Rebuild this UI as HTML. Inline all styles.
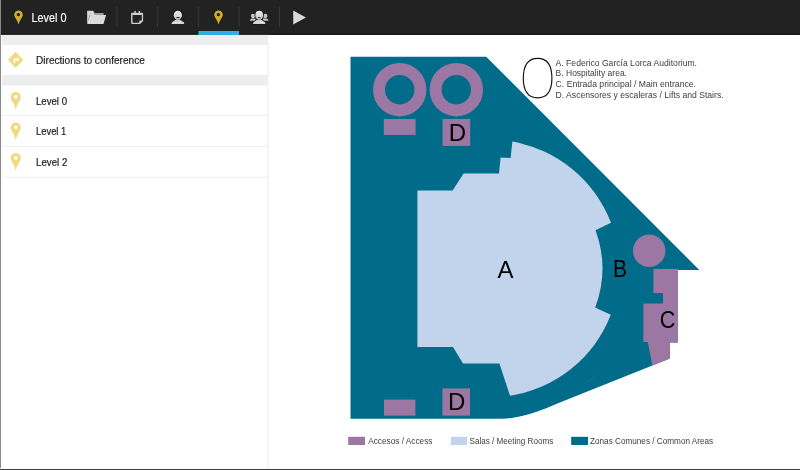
<!DOCTYPE html>
<html>
<head>
<meta charset="utf-8">
<style>
html,body{margin:0;padding:0;}
body{width:800px;height:470px;overflow:hidden;background:#fff;font-family:"Liberation Sans",sans-serif;position:relative;}
#lb{position:absolute;left:0;top:0;width:1px;height:470px;background:#888;}
#bb{position:absolute;left:0;top:468px;width:800px;height:2px;background:linear-gradient(#f4f4f4 0,#f4f4f4 50%,#464646 50%,#464646 100%);}
svg{position:absolute;left:0;top:0;will-change:transform;}
</style>
</head>
<body>
<svg width="800" height="470" viewBox="0 0 800 470" font-family="'Liberation Sans', sans-serif">
  <defs>
    <linearGradient id="hg" x1="0" y1="0" x2="0" y2="1"><stop offset="0" stop-color="#e6e6e6"/><stop offset="0.6" stop-color="#d8d8d8"/><stop offset="1" stop-color="#b4b4b4"/></linearGradient>
    <linearGradient id="sg" x1="0" y1="0" x2="0" y2="1"><stop offset="0" stop-color="#c4c4c4"/><stop offset="0.5" stop-color="#dedede"/><stop offset="1" stop-color="#d2d2d2"/></linearGradient>
  </defs>
  <!-- chrome -->
  <rect x="0" y="0" width="800" height="34" fill="#222"/>
  <rect x="0" y="33.8" width="800" height="1.1" fill="#000"/>
  <rect x="2" y="34.9" width="265.6" height="10" fill="#eee"/>
  <rect x="2" y="74.8" width="265.6" height="10.9" fill="#eee"/>
  <rect x="267.2" y="34.9" width="1.4" height="433" fill="#f1f1f1"/>
  <rect x="2" y="114.9" width="265" height="1" fill="#efefef"/>
  <rect x="2" y="146" width="265" height="1" fill="#efefef"/>
  <rect x="2" y="176.7" width="265" height="1" fill="#efefef"/>
  <!-- header -->
  <g id="hicons">
    <path id="hpin" d="M18.5 10.5 a4.35 4.35 0 0 1 4.35 4.35 c0 1.8 -1.3 3.2 -2.35 5 c-0.95 1.6 -1.55 3.2 -2 5 c-0.45 -1.8 -1.05 -3.4 -2 -5 c-1.05 -1.8 -2.35 -3.2 -2.35 -5 a4.35 4.35 0 0 1 4.35 -4.35z M18.4 13 a1.65 1.65 0 1 0 0.001 0z" fill="#cfad2f" fill-rule="evenodd" stroke="#141414" stroke-width="1" paint-order="stroke"/>
    <text x="31.5" y="22" font-size="11.9" fill="#fff" stroke="#fff" stroke-width="0.12" textLength="35" lengthAdjust="spacingAndGlyphs">Level 0</text>
    <rect x="116.5" y="7" width="1" height="20" fill="#383838"/>
    <rect x="157" y="7" width="1" height="20" fill="#383838"/>
    <rect x="198" y="7" width="1" height="20" fill="#383838"/>
    <rect x="238.5" y="7" width="1" height="20" fill="#383838"/>
    <rect x="279" y="7" width="1" height="20" fill="#383838"/>
    <rect x="198.5" y="31" width="40.5" height="4" fill="#2fb0e4"/>
    <!-- folder -->
    <path d="M87.15 10.8 h6 l1.5 2.2 h8.7 v2 h-13.4 l-2.8 9z" fill="#d6d6d6"/>
    <path d="M94.2 13 h9.1 v1.9 h-9.1z" fill="#9a9a9a"/>
    <path d="M89.9 14.9 h16.2 l-2.6 9.1 h-16.35 l0.4 -1.5z" fill="#dcdcdc"/>
    <path d="M90 14.9 l-1.2 3.8" stroke="#888" stroke-width="0.5" fill="none"/>
    <!-- calendar -->
    <path d="M132.1 12.8 h10 a1 1 0 0 1 1 1 v7.3 l-3 3 h-8 a1 1 0 0 1 -1 -1 v-9.3 a1 1 0 0 1 1 -1z M132.5 15 v7.8 h6.8 v-2.4 h2.5 v-5.4z" fill="#cdcdcd" fill-rule="evenodd"/>
    <rect x="134.4" y="10.9" width="1.4" height="2.2" fill="#cdcdcd"/><rect x="138.7" y="10.9" width="1.4" height="2.2" fill="#cdcdcd"/>
    <!-- person -->
    <ellipse cx="177.85" cy="15.15" rx="4.75" ry="5" fill="#141414"/>
    <rect x="176" y="18.5" width="3.8" height="2.5" fill="#999"/>
    <ellipse cx="177.85" cy="15.15" rx="4.15" ry="4.45" fill="url(#hg)"/>
    <path d="M171.7 24 v-1 c0.3 -0.9 1.6 -1.6 3.6 -3 h5.2 c2 1.4 3.3 2.1 3.6 3 v1z" fill="url(#sg)"/>
    <path d="M176.2 16.9 h3.5 a1.75 1 0 0 1 -3.5 0z" fill="#111"/>
    <!-- pin tab -->
    <use href="#hpin" x="200"/>
    <!-- group -->
    <g fill="#c4c4c4">
      <circle cx="253" cy="16" r="2.15"/><circle cx="265.3" cy="16" r="2.15"/>
      <path d="M250 20.7 v-0.6 c0.2 -0.8 1 -1.2 2 -1.6 h3.4 v2.2z M268.3 20.7 v-0.6 c-0.2 -0.8 -1 -1.2 -2 -1.6 h-3.4 v2.2z"/>
    </g>
    <ellipse cx="259.2" cy="15.2" rx="4.5" ry="4.95" fill="#141414"/>
    <path d="M252.5 24.4 v-1.4 c0.3 -0.9 1.6 -2 3.6 -3.4 h6.2 c2 1.4 3.3 2.5 3.6 3.4 v1.4z" fill="#141414"/>
    <rect x="257.4" y="18.5" width="3.6" height="2.5" fill="#999"/>
    <ellipse cx="259.2" cy="15.2" rx="3.85" ry="4.35" fill="url(#hg)"/>
    <path d="M253.1 24 v-1 c0.3 -0.9 1.6 -1.6 3.4 -3 h5.4 c1.8 1.4 3.1 2.1 3.4 3 v1z" fill="url(#sg)"/>
    <path d="M257.7 17 h3 a1.5 0.85 0 0 1 -3 0z" fill="#111"/>
    <!-- play -->
    <path d="M293.2 10.6 L306 17.5 L293.2 24.4z" fill="#d8d8d8" stroke="#151515" stroke-width="1" paint-order="stroke"/>
  </g>
  <!-- side icons -->
  <g fill="#f1d97f">
    <path d="M15.7 52.2 L23 59.9 L15.7 67.5 L8.4 59.9Z" stroke="#f1d97f" stroke-width="0.7" stroke-linejoin="round"/>
    <path id="pin" d="M15.75 92.1 a5.1 5.1 0 0 1 5.1 5.1 c0 2.1 -1.5 3.8 -2.7 5.9 c-1.1 2 -1.9 4.2 -2.4 6.7 c-0.5 -2.5 -1.3 -4.7 -2.4 -6.7 c-1.2 -2.1 -2.7 -3.8 -2.7 -5.9 a5.1 5.1 0 0 1 5.1 -5.1z M15.85 95 a1.9 1.9 0 1 0 0.001 0z" fill-rule="evenodd"/>
    <use href="#pin" y="30.4"/>
    <use href="#pin" y="61"/>
  </g>
  <path d="M13.5 63 V59.6 a1 1 0 0 1 1 -1 H17 V57 L19.4 59.4 L17 61.7 V60.3 H15.2 V63 Z" fill="#fff"/>

  <g font-size="10.3" fill="#222" stroke="#222" stroke-width="0.2">
    <text x="36" y="64" textLength="108.8" lengthAdjust="spacingAndGlyphs">Directions to conference</text>
    <text x="36" y="104.6" textLength="31" lengthAdjust="spacingAndGlyphs">Level 0</text>
    <text x="36" y="135.2" textLength="30.3" lengthAdjust="spacingAndGlyphs">Level 1</text>
    <text x="36" y="165.8" textLength="31.3" lengthAdjust="spacingAndGlyphs">Level 2</text>
  </g>
  <!-- map -->
  <path d="M350.5 56.8 L486.2 56.8 L699.3 270 L678 270 L678 342.6 L669.9 342.6 L669.9 358.4 L558 403.2 Q523 418.8 502 418.8 L350.5 418.8 Z" fill="#006c8a"/>
  <path d="M417.4 190.4 L452.6 190.4 L463.6 173.6 L499 173.6 L500.6 157.6 L510.6 158 L512.4 141.6 A129 129 0 0 1 611 222.8 L595.5 230.2 A111.5 111.5 0 0 1 595.2 307.6 L610.8 314.8 A129 129 0 0 1 510 395.8 L499.4 363.6 L463 363.6 L453 347 L417.4 347 Z" fill="#c2d3ec"/>
  <g fill="#9c77a3">
    <path d="M653.4 269 L678 269 L678 342.6 L669.9 342.6 L669.9 358.4 L652.4 365.6 L647.8 342 L643.4 342 L643.4 303.6 L663 303.6 L663 293 L653.4 293 Z"/>
    <circle cx="649.2" cy="250.8" r="16.2"/>
    <rect x="383.8" y="119" width="31.8" height="15.9"/>
    <rect x="442.6" y="119" width="27.6" height="26.9"/>
    <rect x="384" y="399.6" width="31.4" height="16"/>
    <rect x="442.4" y="388.4" width="27.6" height="27.2"/>
  </g>
  <g fill="none" stroke="#9c77a3" stroke-width="12">
    <circle cx="399.7" cy="89.7" r="20.7"/>
    <circle cx="456.3" cy="89.7" r="20.7"/>
  </g>
  <g font-size="24" fill="#000">
    <text x="448.7" y="141.1">D</text>
    <text x="448" y="410.1">D</text>
    <text x="497.4" y="278">A</text>
    <text x="612.9" y="276.8" transform="translate(614.4 0) scale(0.88 1) translate(-614.4 0)">B</text>
    <text x="659.6" y="328.2" transform="translate(661 0) scale(0.9 1) translate(-661 0)">C</text>
  </g>
  <path d="M587 383 L596 375" stroke="#2b8199" stroke-width="0.5" fill="none"/>
  <!-- legend top -->
  <path d="M537.6 58.3 C547.038 58.3 551.9 65.032 551.9 78.1 C551.9 91.16799999999999 547.038 97.89999999999999 537.6 97.89999999999999 C528.162 97.89999999999999 523.3000000000001 91.16799999999999 523.3000000000001 78.1 C523.3000000000001 65.032 528.162 58.3 537.6 58.3Z" fill="none" stroke="#111" stroke-width="1.15"/>
  <g font-size="8.8" fill="#3c3c3c">
    <text x="555.6" y="65.6" textLength="141.4" lengthAdjust="spacingAndGlyphs">A. Federico García Lorca Auditorium.</text>
    <text x="555.6" y="76.4" textLength="71.4" lengthAdjust="spacingAndGlyphs">B. Hospitality area.</text>
    <text x="555.6" y="87" textLength="140.4" lengthAdjust="spacingAndGlyphs">C. Entrada principal / Main entrance.</text>
    <text x="555.6" y="97.6" textLength="168" lengthAdjust="spacingAndGlyphs">D. Ascensores y escaleras / Lifts and Stairs.</text>
  </g>
  <!-- legend bottom -->
  <rect x="348.2" y="436.8" width="16.8" height="8.2" fill="#9c77a3"/>
  <rect x="450.8" y="436.8" width="16.2" height="8.2" fill="#c2d3ec"/>
  <rect x="571.2" y="436.8" width="16.8" height="8.2" fill="#006c8a"/>
  <g font-size="8.8" fill="#3c3c3c">
    <text x="368.2" y="444.3" textLength="64.3" lengthAdjust="spacingAndGlyphs">Accesos / Access</text>
    <text x="469.5" y="444.3" textLength="83.8" lengthAdjust="spacingAndGlyphs">Salas / Meeting Rooms</text>
    <text x="590" y="444.3" textLength="123.2" lengthAdjust="spacingAndGlyphs">Zonas Comunes / Common Areas</text>
  </g>
</svg>
<div id="lb"></div>
<div id="bb"></div>
</body>
</html>
